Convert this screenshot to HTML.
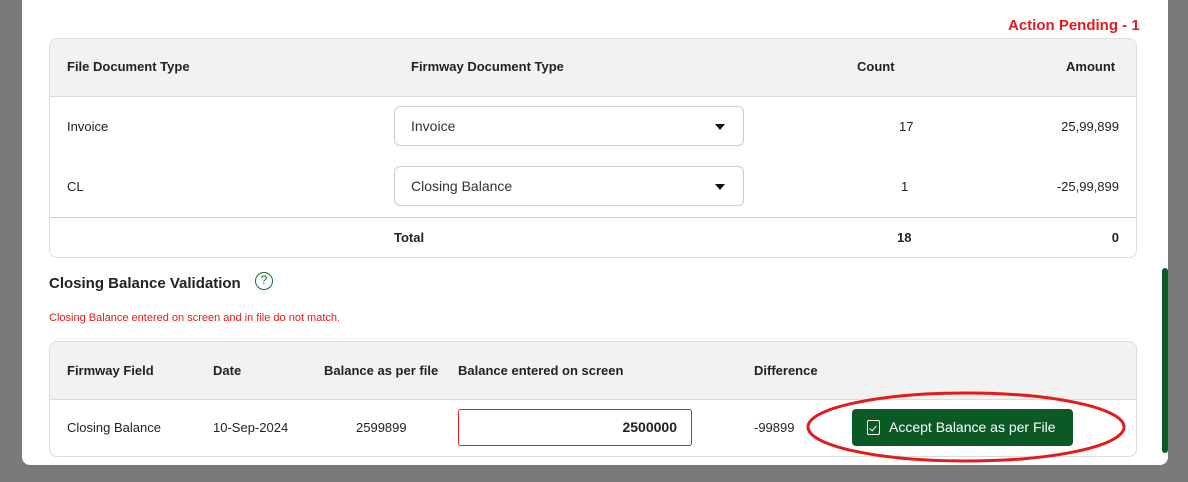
<!DOCTYPE html>
<html><head><style>
*{box-sizing:border-box;margin:0;padding:0}
body{width:1188px;height:482px;background:#7a7a7a;font-family:"Liberation Sans",sans-serif;position:relative;overflow:hidden;color:#222}
.panel{position:absolute;left:22px;top:0;width:1146px;height:465px;background:#fff;border-radius:0 0 8px 8px}
.abs{position:absolute}
.b{font-weight:bold}
.t1{position:absolute;left:49px;top:38px;width:1088px;height:220px;border:1px solid #ddd;border-radius:8px;overflow:hidden}
.hd{position:absolute;left:0;top:0;right:0;height:58px;background:#f2f2f2;border-bottom:1px solid #ddd}
.sel{position:absolute;left:344px;width:350px;height:40px;border:1px solid #ccc;border-radius:6px;font-size:14px;padding-left:16px;line-height:38px;color:#333}
.sel:after{content:"";position:absolute;right:18px;top:17px;border-left:5px solid transparent;border-right:5px solid transparent;border-top:6px solid #111}
.f13{font-size:13px}
.t2{position:absolute;left:49px;top:341px;width:1088px;height:116px;border:1px solid #ddd;border-radius:8px;overflow:hidden}
</style></head><body>
<div class="panel"></div>
<div class="abs b" style="left:1008px;top:17px;font-size:15px;color:#e31b1b">Action Pending - 1</div>
<div class="t1">
 <div class="hd"></div>
 <div class="abs b f13" style="left:17px;top:20px">File Document Type</div>
 <div class="abs b f13" style="left:361px;top:20px">Firmway Document Type</div>
 <div class="abs b f13" style="left:807px;top:20px">Count</div>
 <div class="abs b f13" style="left:1016px;top:20px">Amount</div>
 <div class="abs f13" style="left:17px;top:80px">Invoice</div>
 <div class="sel" style="top:67px">Invoice</div>
 <div class="abs f13" style="left:849px;top:80px">17</div>
 <div class="abs f13" style="right:17px;top:80px">25,99,899</div>
 <div class="abs f13" style="left:17px;top:140px">CL</div>
 <div class="sel" style="top:127px">Closing Balance</div>
 <div class="abs f13" style="left:851px;top:140px">1</div>
 <div class="abs f13" style="right:17px;top:140px">-25,99,899</div>
 <div class="abs" style="left:0;right:0;top:178px;border-top:1px solid #ccc"></div>
 <div class="abs b f13" style="left:344px;top:191px">Total</div>
 <div class="abs b f13" style="left:847px;top:191px">18</div>
 <div class="abs b f13" style="right:17px;top:191px">0</div>
</div>
<div class="abs b" style="left:49px;top:275px;font-size:15px">Closing Balance Validation</div>
<div class="abs" style="left:255px;top:272px;width:18px;height:18px;border:1.5px solid #1e6b2e;border-radius:50%;color:#1e6b2e;font-size:12px;text-align:center;line-height:15px">?</div>
<div class="abs" style="left:49px;top:312px;font-size:11px;color:#e31b1b">Closing Balance entered on screen and in file do not match.</div>
<div class="t2">
 <div class="hd"></div>
 <div class="abs b f13" style="left:17px;top:21px">Firmway Field</div>
 <div class="abs b f13" style="left:163px;top:21px">Date</div>
 <div class="abs b f13" style="left:274px;top:21px">Balance as per file</div>
 <div class="abs b f13" style="left:408px;top:21px">Balance entered on screen</div>
 <div class="abs b f13" style="left:704px;top:21px">Difference</div>
 <div class="abs f13" style="left:17px;top:78px">Closing Balance</div>
 <div class="abs f13" style="left:163px;top:78px">10-Sep-2024</div>
 <div class="abs f13" style="left:306px;top:78px">2599899</div>
 <div class="abs b" style="left:408px;top:67px;width:234px;height:37px;border:1px solid #e31b1b;border-radius:3px;font-size:14px;text-align:right;padding-right:14px;line-height:35px">2500000</div>
 <div class="abs f13" style="left:704px;top:78px">-99899</div>
 <div class="abs" style="left:802px;top:67px;width:221px;height:37px;background:#0b5a26;border-radius:4px;color:#fff;font-size:14px;line-height:37px;padding-left:37px">Accept Balance as per File</div>
 <div class="abs" style="left:817px;top:78px;width:13px;height:15px;border:1.3px solid #fff;border-radius:2px"></div>
 <div class="abs" style="left:821px;top:82px;width:4px;height:7px;border-right:1.3px solid #fff;border-bottom:1.3px solid #fff;transform:rotate(40deg)"></div>
</div>
<svg class="abs" style="left:805px;top:390px" width="322" height="74"><ellipse cx="161" cy="37" rx="158" ry="34" fill="none" stroke="#e31b1b" stroke-width="3"/></svg>
<div class="abs" style="left:1162px;top:268px;width:6px;height:185px;background:#0b5a26;border-radius:3px"></div>
</body></html>
